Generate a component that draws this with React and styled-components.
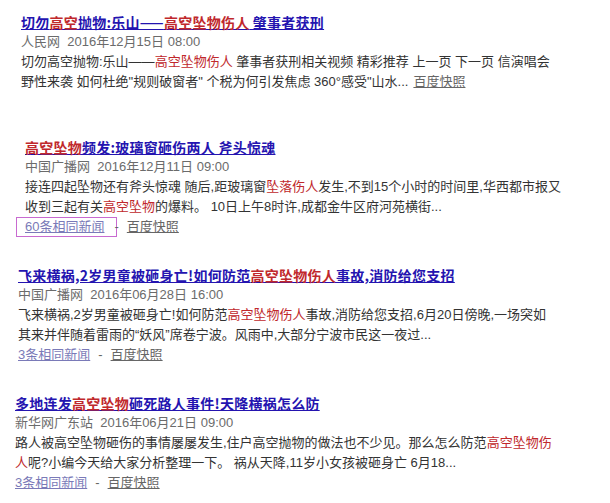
import React from "react";
import styled, { createGlobalStyle } from "styled-components";

const Global = createGlobalStyle`
  html, body { margin: 0; padding: 0; background: #fff; }
  body { font-family: "Liberation Sans", "Noto Sans CJK SC", sans-serif; }
`;

const Page = styled.div`
  padding-top: 12px;
  width: 610px;
  height: 503px;
  overflow: hidden;
  box-sizing: border-box;
`;

const Result = styled.div`
  padding-left: ${(p) => p.$indent}px;
  margin-bottom: ${(p) => p.$after}px;
`;

const Title = styled.a`
  display: block;
  font-family: "Noto Sans CJK SC", sans-serif;
  font-weight: 700;
  font-size: 14px;
  line-height: 20px;
  height: 20px;
  color: #2414b0;
  text-decoration: underline;
  white-space: nowrap;
  letter-spacing: 0.25px;
`;

const Em = styled.em`
  font-style: normal;
  color: #c0282c;
`;

const Source = styled.div`
  font-size: 13px;
  line-height: 20px;
  color: #6b6b6b;
  white-space: nowrap;
`;

const Summary = styled.div`
  font-size: 13px;
  line-height: 20px;
  color: #333;
  width: 560px;
`;

const Line = styled.div`
  white-space: nowrap;
  height: 20px;
`;

const Links = styled.div`
  font-size: 13px;
  line-height: 18px;
  height: 20px;
  color: #666;
  display: flex;
  align-items: center;
`;

const Same = styled.a`
  color: #7a7ab8;
  text-decoration: underline;
  ${(p) =>
    p.$focus
      ? `border: 1px solid #c86ad0; padding: 0 12px 0 8px; margin-left: -9px;`
      : ``}
`;

const Snap = styled.a`
  color: #666;
  text-decoration: underline;
  margin-left: ${(p) => p.$ml || 0}px;
`;

const Dash = styled.span`
  color: #666;
  margin: 0 8px 0 ${(p) => (p.$tight ? -3 : 8)}px;
`;

export default function App() {
  return (
    <Page>
      <Global />
      <Result $indent={21} $after={45}>
        <Title>
          切勿<Em>高空</Em>抛物:乐山——<Em>高空坠物伤人</Em> 肇事者获刑
        </Title>
        <Source>人民网&nbsp; 2016年12月15日 08:00</Source>
        <Summary>
          <Line>
            切勿高空抛物:乐山——<Em>高空坠物伤人</Em> 肇事者获刑相关视频 精彩推荐 上一页 下一页 信演唱会
          </Line>
          <Line>
            野性来袭 如何杜绝"规则破窗者" 个税为何引发焦虑 360°感受"山水...
            <Snap $ml={5}>百度快照</Snap>
          </Line>
        </Summary>
      </Result>

      <Result $indent={25} $after={28}>
        <Title>
          <Em>高空坠物</Em>频发:玻璃窗砸伤两人 斧头惊魂
        </Title>
        <Source>中国广播网&nbsp; 2016年12月11日 09:00</Source>
        <Summary>
          <Line>
            接连四起坠物还有斧头惊魂 随后,距玻璃窗<Em>坠落伤人</Em>发生,不到15个小时的时间里,华西都市报又
          </Line>
          <Line>
            收到三起有关<Em>高空坠物</Em>的爆料。 10日上午8时许,成都金牛区府河苑横街...
          </Line>
        </Summary>
        <Links>
          <Same $focus>60条相同新闻</Same>
          <Dash $tight>-</Dash>
          <Snap>百度快照</Snap>
        </Links>
      </Result>

      <Result $indent={18} $after={28}>
        <Title>
          飞来横祸,2岁男童被砸身亡!如何防范<Em>高空坠物伤人</Em>事故,消防给您支招
        </Title>
        <Source>中国广播网&nbsp; 2016年06月28日 16:00</Source>
        <Summary>
          <Line>
            飞来横祸,2岁男童被砸身亡!如何防范<Em>高空坠物伤人</Em>事故,消防给您支招,6月20日傍晚,一场突如
          </Line>
          <Line>其来并伴随着雷雨的“妖风”席卷宁波。风雨中,大部分宁波市民这一夜过...</Line>
        </Summary>
        <Links>
          <Same>3条相同新闻</Same>
          <Dash>-</Dash>
          <Snap>百度快照</Snap>
        </Links>
      </Result>

      <Result $indent={15} $after={0}>
        <Title>
          多地连发<Em>高空坠物</Em>砸死路人事件!天降横祸怎么防
        </Title>
        <Source>新华网广东站&nbsp; 2016年06月21日 09:00</Source>
        <Summary>
          <Line>
            路人被高空坠物砸伤的事情屡屡发生,住户高空抛物的做法也不少见。那么怎么防范<Em>高空坠物伤</Em>
          </Line>
          <Line>
            <Em>人</Em>呢?小编今天给大家分析整理一下。 祸从天降,11岁小女孩被砸身亡 6月18...
          </Line>
        </Summary>
        <Links>
          <Same>3条相同新闻</Same>
          <Dash>-</Dash>
          <Snap>百度快照</Snap>
        </Links>
      </Result>
    </Page>
  );
}
